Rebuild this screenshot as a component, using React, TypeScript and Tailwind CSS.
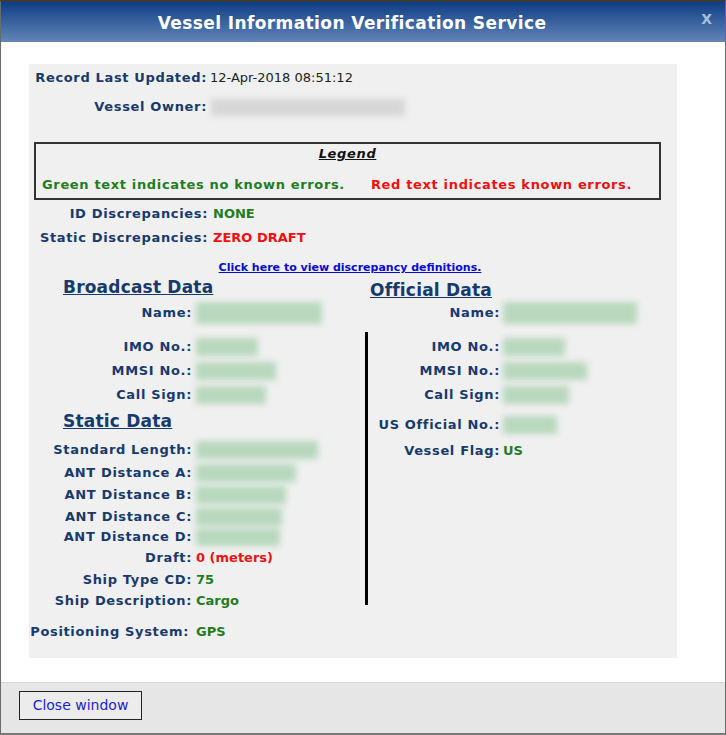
import React from 'react';

const navy = 'text-[#173a6c]';
const green = 'text-[#1f7d1f]';
const red = 'text-[#f01010]';
// bold labels run a bit wide in this page
const bold = 'font-bold tracking-[0.65px]';

// redacted value: a soft smudge where the text used to be
const Smudge = ({ w, h = 18, tone = 'bg-[#b7d8bd]' }: { w: number; h?: number; tone?: string }) => (
  <span className={`inline-block ${tone} blur-[3px]`} style={{ width: w, height: h }} />
);

type Row = { label: string; value: React.ReactNode; h: number };

const broadcast: Row[] = [
  { label: 'Name:', value: <Smudge w={126} h={22} />, h: 34 },
  { label: 'IMO No.:', value: <Smudge w={62} />, h: 24 },
  { label: 'MMSI No.:', value: <Smudge w={80} />, h: 24 },
  { label: 'Call Sign:', value: <Smudge w={70} />, h: 25 },
];

const staticRows: Row[] = [
  { label: 'Standard Length:', value: <Smudge w={122} />, h: 23 },
  { label: 'ANT Distance A:', value: <Smudge w={100} />, h: 22 },
  { label: 'ANT Distance B:', value: <Smudge w={90} />, h: 22 },
  { label: 'ANT Distance C:', value: <Smudge w={86} />, h: 20 },
  { label: 'ANT Distance D:', value: <Smudge w={84} />, h: 21 },
  { label: 'Draft:', value: <span className={red}>0 (meters)</span>, h: 22 },
  { label: 'Ship Type CD:', value: <span className={green}>75</span>, h: 21 },
  { label: 'Ship Description:', value: <span className={green}>Cargo</span>, h: 31 },
];

const official: Row[] = [
  { label: 'Name:', value: <Smudge w={134} h={22} />, h: 34 },
  { label: 'IMO No.:', value: <Smudge w={62} />, h: 24 },
  { label: 'MMSI No.:', value: <Smudge w={84} />, h: 24 },
  { label: 'Call Sign:', value: <Smudge w={66} />, h: 30 },
  { label: 'US Official No.:', value: <Smudge w={54} />, h: 26 },
  { label: 'Vessel Flag:', value: <span className={green}>US</span>, h: 22 },
];

const Field = ({ row, labelW, gap }: { row: Row; labelW: number; gap: number }) => (
  <div className="flex items-start leading-[22px]" style={{ height: row.h }}>
    <span className={`shrink-0 text-right ${bold} ${navy}`} style={{ width: labelW }}>
      {row.label}
    </span>
    <span className="font-bold flex items-center h-[22px]" style={{ marginLeft: gap }}>
      {row.value}
    </span>
  </div>
);

const App: React.FC = () => {
  return (
    <div
      className="w-[726px] h-[735px] flex flex-col bg-white border-t-2 border-x border-b-2 border-t-[#3a3a3a] border-x-[#6b6b6b] border-b-[#7a7a7a] text-[13px]"
      style={{ fontFamily: '"DejaVu Sans", Verdana, sans-serif' }}
    >
      {/* title bar */}
      <div className="relative h-[40px] shrink-0 flex items-center justify-center pt-[3px] pr-[22px] bg-gradient-to-b from-[#0d3d84] to-[#6286b6]">
        <h1 className="text-white font-bold text-[17px] tracking-[0.4px]">Vessel Information Verification Service</h1>
        <span className="absolute right-[13px] top-[7px] text-[#a9c1de] font-bold text-[14px]">X</span>
      </div>

      {/* body */}
      <div className="flex-1 pt-[22px] pl-[28px] pr-[48px]">
        <div className="w-[648px] h-[594px] bg-[#f0f0f0] pt-[4px]">
          <div className="flex leading-[20px]">
            <span className={`w-[178px] text-right ${bold} ${navy}`}>Record Last Updated:</span>
            <span className="ml-[3px] text-[#222]">12-Apr-2018 08:51:12</span>
          </div>
          <div className="flex items-center h-[20px] mt-[9px]">
            <span className={`w-[178px] text-right ${bold} ${navy}`}>Vessel Owner:</span>
            <span className="ml-[4px] flex items-center">
              <Smudge w={194} h={17} tone="bg-[#d6d6d6]" />
            </span>
          </div>

          {/* legend */}
          <div className="mt-[25px] ml-[5px] w-[627px] h-[58px] border-2 border-[#333] flex flex-col">
            <div className={`text-center italic underline ${bold} text-[#111] leading-[18px] mt-[1px]`}>Legend</div>
            <div className={`flex mt-[13px] ${bold} leading-[18px]`}>
              <span className={`ml-[6px] ${green}`}>Green text indicates no known errors.</span>
              <span className={`ml-[26px] ${red}`}>Red text indicates known errors.</span>
            </div>
          </div>

          <div className="flex leading-[20px] mt-[4px]">
            <span className={`w-[179px] text-right ${bold} ${navy}`}>ID Discrepancies:</span>
            <span className={`ml-[5px] font-bold ${green}`}>NONE</span>
          </div>
          <div className="flex leading-[20px] mt-[4px]">
            <span className={`w-[179px] text-right ${bold} ${navy}`}>Static Discrepancies:</span>
            <span className={`ml-[5px] font-bold ${red}`}>ZERO DRAFT</span>
          </div>

          <div className="mt-[12px] text-center leading-[14px] pr-[6px]">
            <a href="#" className="text-[11px] font-bold text-[#0a0ad0] underline">
              Click here to view discrepancy definitions.
            </a>
          </div>

          {/* data columns */}
          <div className="flex">
            <div className="w-[336px]">
              <h2 className={`ml-[34px] text-[17px] font-bold tracking-[0.2px] underline leading-[24px] h-[27px] ${navy}`}>Broadcast Data</h2>
              {broadcast.map((r) => (
                <Field key={r.label} row={r} labelW={163} gap={4} />
              ))}
              <h2 className={`ml-[34px] text-[17px] font-bold tracking-[0.2px] underline leading-[24px] h-[30px] ${navy}`}>Static Data</h2>
              {staticRows.map((r) => (
                <Field key={r.label} row={r} labelW={163} gap={4} />
              ))}
            </div>
            <div className="w-[3px] bg-black mt-[57px] h-[273px] shrink-0" />
            <div className="pt-[3px]">
              <h2 className={`ml-[2px] text-[17px] font-bold tracking-[0.2px] underline leading-[24px] h-[24px] ${navy}`}>Official Data</h2>
              {official.map((r) => (
                <Field key={r.label} row={r} labelW={132} gap={3} />
              ))}
            </div>
          </div>
          <div className="flex leading-[22px]">
            <span className={`w-[160px] text-right ${bold} ${navy}`}>Positioning System:</span>
            <span className={`ml-[7px] font-bold ${green}`}>GPS</span>
          </div>
        </div>
      </div>

      {/* footer */}
      <div className="h-[51px] shrink-0 bg-[#e6e6e6] border-t border-[#d8d8d8] flex items-start pt-[8px] pl-[18px]">
        <button className="h-[29px] w-[123px] border border-[#222] bg-[#ececec] text-[#1c1ccc] text-[14px]">
          Close window
        </button>
      </div>
    </div>
  );
};

export default App;
